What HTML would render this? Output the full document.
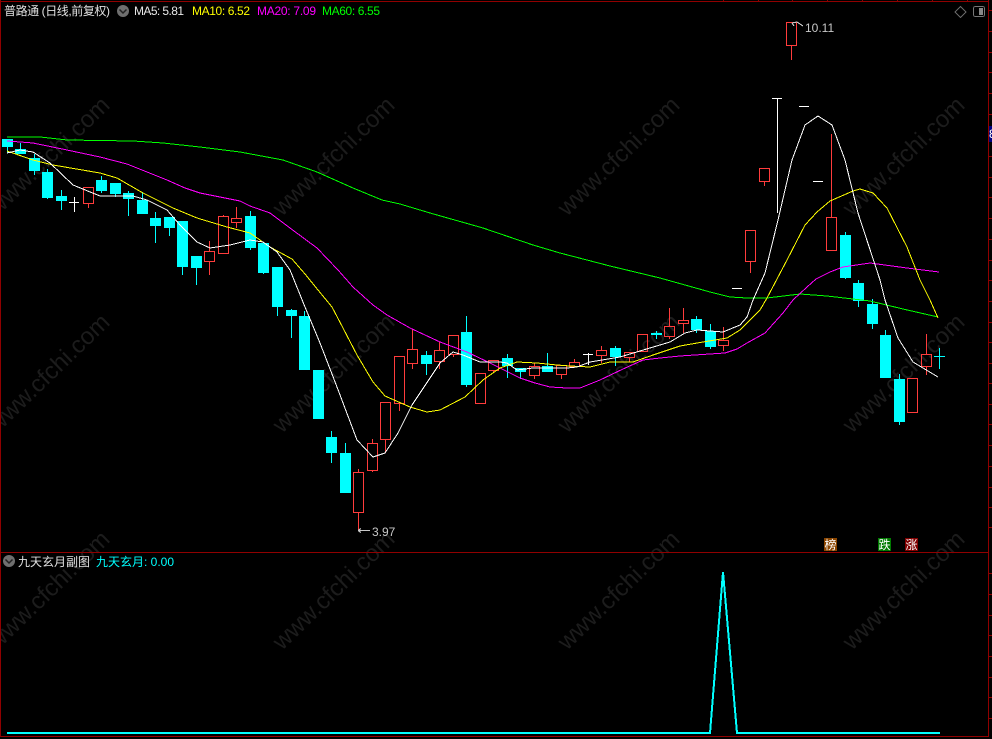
<!DOCTYPE html>
<html><head><meta charset="utf-8"><style>
html,body{margin:0;padding:0;background:#000;width:992px;height:739px;overflow:hidden}
svg{display:block}
text{font-family:"Liberation Sans","WenQuanYi Zen Hei","Noto Sans CJK SC",sans-serif;font-size:12px}
.wm text{font-size:24px;fill:#1c1c1c}
.c rect{fill:#0ff}
.c path{stroke:#0ff;fill:none}
.r rect{fill:none;stroke:#ff3c3c}
.r path{stroke:#ff3c3c;fill:none}
.w{stroke:#fff;fill:none}
.ma{fill:none;shape-rendering:crispEdges}
</style></head><body>
<svg width="992" height="739" viewBox="0 0 992 739" xmlns="http://www.w3.org/2000/svg">
<rect width="992" height="739" fill="#000"/>
<g class="wm">
<text transform="translate(-3,217) rotate(-44)">www.cfchi.com</text>
<text transform="translate(282,217) rotate(-44)">www.cfchi.com</text>
<text transform="translate(567,217) rotate(-44)">www.cfchi.com</text>
<text transform="translate(852,217) rotate(-44)">www.cfchi.com</text>
<text transform="translate(-3,434) rotate(-44)">www.cfchi.com</text>
<text transform="translate(282,434) rotate(-44)">www.cfchi.com</text>
<text transform="translate(567,434) rotate(-44)">www.cfchi.com</text>
<text transform="translate(852,434) rotate(-44)">www.cfchi.com</text>
<text transform="translate(-3,651) rotate(-44)">www.cfchi.com</text>
<text transform="translate(282,651) rotate(-44)">www.cfchi.com</text>
<text transform="translate(567,651) rotate(-44)">www.cfchi.com</text>
<text transform="translate(852,651) rotate(-44)">www.cfchi.com</text>
</g>
<g shape-rendering="crispEdges">
<path d="M.5 0V737M0 1.5H989M988.5 0V737M0 552.5H989M0 736.5H989" stroke="#900000" fill="none"/>
<path d="M723.5 0v2M758.5 0v2M792.5 0v2M827.5 0v2M862.5 0v2M897.5 0v2M932.5 0v2M967.5 0v2M989 10.5h3M989 31.5h3M989 52.5h3M989 72.5h3M989 93.5h3M989 114.5h3M989 156.5h3M989 177.5h3M989 197.5h3M989 218.5h3M989 239.5h3M989 260.5h3M989 280.5h3M989 301.5h3M989 322.5h3M989 342.5h3M989 363.5h3M989 383.5h3M989 404.5h3M989 424.5h3M989 445.5h3M989 466.5h3M989 487.5h3M989 507.5h3M989 527.5h3M989 573.5h3M989 594.5h3M989 615.5h3M989 635.5h3M989 656.5h3M989 677.5h3M989 697.5h3M989 718.5h3" stroke="#900000" fill="none"/>
<rect x="989" y="126" width="3" height="16" fill="#000080"/>
<g class="c">
<rect x="2" y="139" width="11" height="8"/><path d="M7.5 147V153"/>
<rect x="15" y="149" width="11" height="5"/><path d="M20.5 143V149"/>
<rect x="29" y="158" width="11" height="13"/><path d="M34.5 154V175"/>
<rect x="42" y="172" width="11" height="26"/><path d="M47.5 169V199"/>
<rect x="56" y="196" width="11" height="5"/><path d="M61.5 190V210"/>
<rect x="96" y="180" width="11" height="11"/><path d="M101.5 176V193"/>
<rect x="110" y="183" width="11" height="11"/><path d="M115.5 183V197"/>
<rect x="123" y="193" width="11" height="6"/><path d="M128.5 191V216"/>
<rect x="137" y="200" width="11" height="14"/><path d="M142.5 192V214"/>
<rect x="150" y="218" width="11" height="8"/><path d="M155.5 212V243"/>
<rect x="164" y="217" width="11" height="11"/><path d="M169.5 217V236"/>
<rect x="177" y="221" width="11" height="46"/><path d="M182.5 221V275"/>
<rect x="191" y="256" width="11" height="12"/><path d="M196.5 256V285"/>
<rect x="245" y="216" width="11" height="32"/><path d="M250.5 211V250"/>
<rect x="258" y="243" width="11" height="30"/><path d="M263.5 243V274"/>
<rect x="272" y="267" width="11" height="40"/><path d="M277.5 267V316"/>
<rect x="286" y="310" width="11" height="6"/><path d="M291.5 309V338"/>
<rect x="299" y="316" width="11" height="54"/><path d="M304.5 311V370"/>
<rect x="313" y="370" width="11" height="49"/>
<rect x="326" y="437" width="11" height="16"/><path d="M331.5 431V463"/>
<rect x="340" y="453" width="11" height="40"/><path d="M345.5 443V493"/>
<rect x="421" y="355" width="11" height="9"/><path d="M426.5 351V375"/>
<rect x="461" y="332" width="11" height="53"/><path d="M466.5 316V387"/>
<rect x="502" y="358" width="11" height="8"/><path d="M507.5 354V378"/>
<rect x="515" y="368" width="11" height="4"/><path d="M520.5 368V379"/>
<rect x="542" y="366" width="11" height="6"/><path d="M547.5 353V372"/>
<rect x="610" y="348" width="11" height="9"/><path d="M615.5 346V366"/>
<rect x="651" y="333" width="11" height="2"/><path d="M656.5 331V339"/>
<rect x="691" y="319" width="11" height="11"/><path d="M696.5 316V333"/>
<rect x="705" y="331" width="11" height="16"/><path d="M710.5 324V349"/>
<rect x="840" y="235" width="11" height="43"/><path d="M845.5 232V279"/>
<rect x="853" y="283" width="11" height="18"/><path d="M858.5 280V307"/>
<rect x="867" y="304" width="11" height="20"/><path d="M872.5 299V329"/>
<rect x="880" y="335" width="11" height="43"/><path d="M885.5 330V378"/>
<rect x="894" y="379" width="11" height="43"/><path d="M899.5 374V425"/>
<path d="M934 356.5H945M939.5 348V369"/>
</g>
<g class="r">
<rect x="83.5" y="187.5" width="10" height="16"/><path d="M88.5 203V208"/>
<rect x="204.5" y="251.5" width="10" height="10"/><path d="M209.5 241V251M209.5 261V275"/>
<rect x="218.5" y="216.5" width="10" height="37"/><path d="M223.5 215V216"/>
<rect x="231.5" y="218.5" width="10" height="4"/><path d="M236.5 207V218M236.5 222V228"/>
<rect x="353.5" y="472.5" width="10" height="40"/><path d="M358.5 469V472M358.5 512V530"/>
<rect x="367.5" y="443.5" width="10" height="27"/><path d="M372.5 439V443M372.5 470V472"/>
<rect x="380.5" y="402.5" width="10" height="37"/><path d="M385.5 439V453"/>
<rect x="394.5" y="356.5" width="10" height="47"/><path d="M399.5 403V411"/>
<rect x="407.5" y="349.5" width="10" height="14"/><path d="M412.5 329V349M412.5 363V369"/>
<rect x="434.5" y="350.5" width="10" height="11"/><path d="M439.5 342V350M439.5 361V369"/>
<rect x="448.5" y="335.5" width="10" height="19"/><path d="M453.5 354V357"/>
<rect x="475.5" y="373.5" width="10" height="30"/>
<rect x="488.5" y="360.5" width="10" height="10"/><path d="M493.5 370V373"/>
<rect x="529.5" y="366.5" width="10" height="9"/><path d="M534.5 363V366M534.5 375V379"/>
<rect x="556.5" y="365.5" width="10" height="9"/><path d="M561.5 374V379"/>
<rect x="569.5" y="362.5" width="10" height="4"/><path d="M574.5 359V362"/>
<rect x="596.5" y="350.5" width="10" height="5"/><path d="M601.5 346V350M601.5 355V363"/>
<rect x="624.5" y="352.5" width="10" height="5"/><path d="M629.5 357V362"/>
<rect x="637.5" y="334.5" width="10" height="17"/>
<rect x="664.5" y="326.5" width="10" height="10"/><path d="M669.5 308V326M669.5 336V339"/>
<rect x="678.5" y="320.5" width="10" height="3"/><path d="M683.5 308V320M683.5 323V333"/>
<rect x="718.5" y="340.5" width="10" height="5"/><path d="M723.5 327V340M723.5 345V351"/>
<rect x="745.5" y="230.5" width="10" height="31"/><path d="M750.5 261V273"/>
<rect x="759.5" y="168.5" width="10" height="13"/><path d="M764.5 181V186"/>
<rect x="786.5" y="22.5" width="10" height="23"/><path d="M791.5 45V60"/>
<rect x="826.5" y="217.5" width="10" height="33"/><path d="M831.5 134V217"/>
<rect x="907.5" y="378.5" width="10" height="34"/>
<rect x="921.5" y="354.5" width="10" height="12"/><path d="M926.5 334V354M926.5 366V375"/>
</g>
<path class="w" d="M69 202.5H79M74.5 197V212M583 354.5H593M588.5 353V365M772 98.5H782M777.5 98V213M732 288.5H742M799 106.5H809M813 181.5H823"/>
<polyline class="ma" stroke="#00ff00" points="7,137 40,137 67,140 133,141 163,143 200,147 240,152 283,160 317,172 353,188 382,200 400,204 430,213 483,228 533,245 560,253 610,266 660,278 710,292 730,297 747,298 767,298 800,294 827,296 853,299 870,301 903,309 938,317"/>
<polyline class="ma" stroke="#ff00ff" points="7,141 33,143 67,150 100,157 127,164 147,172 167,180 185,188 200,193 220,197 240,201 250,206 270,213 290,228 317,248 338,270 353,287 373,305 387,315 410,328 440,342 467,352 490,363 520,378 535,383 550,387 567,388 580,388 600,380 623,369 643,360 660,358 680,356 725,353 737,349 747,343 765,333 783,313 793,300 807,287 816,279 830,272 843,267 870,263 907,268 939,272"/>
<polyline class="ma" stroke="#ffff00" points="7,151 33,160 53,165 100,173 117,178 143,193 173,208 197,218 227,227 250,233 270,247 292,259 305,274 318,290 332,307 343,328 357,355 373,382 385,396 410,407 427,412 440,410 465,397 483,380 500,368 517,362 537,363 557,365 570,366 590,367 610,362 633,362 653,355 680,346 703,342 727,338 740,330 760,310 767,298 787,260 805,225 817,212 830,201 853,191 860,189 873,193 887,208 907,247 920,280 930,300 938,318"/>
<polyline class="ma" stroke="#ffffff" points="7,153 20,150 33,152 50,163 73,185 100,196 133,196 147,200 167,210 180,225 197,242 210,248 230,245 250,240 263,242 277,252 290,270 305,307 320,343 337,387 357,440 373,457 385,453 398,433 412,405 440,363 453,352 463,355 480,362 500,362 507,363 517,370 533,368 567,368 577,367 590,362 620,357 650,348 670,342 685,333 697,330 723,332 740,325 747,317 753,300 765,273 778,220 792,160 805,125 818,116 832,125 845,160 858,213 880,280 885,300 898,338 913,362 938,377"/>
<polyline fill="none" stroke="#0ff" stroke-width="2" points="7,733 710,733 723,572 737,733 940,733"/>
<rect x="824" y="538" width="13" height="13" fill="#8a4500"/>
<rect x="878" y="538" width="13" height="13" fill="#007a00"/>
<rect x="905" y="538" width="13" height="13" fill="#800000"/>
<path d="M358 530.5H370M358 530.5l3-2M358 530.5l3 2" stroke="#c8c8c8" fill="none"/>
<path d="M792 23l5-1 6 4M792 23l2 3" stroke="#c8c8c8" fill="none"/>
<path d="M960.5 6.5l5.5 5.5-5.5 5.5-5.5-5.5z" stroke="#666" fill="none"/>
<rect x="973.5" y="6.5" width="11" height="10" rx="2" stroke="#777" fill="none"/>
<rect x="979" y="8" width="4" height="7" fill="#888"/>
</g>
<circle cx="123" cy="11" r="6" fill="#6f6f6f"/>
<path d="M119.5 9.5l3.5 3.5 3.5-3.5" stroke="#222" stroke-width="1.5" fill="none"/>
<circle cx="9" cy="561" r="6" fill="#6f6f6f"/>
<path d="M5.5 559.5l3.5 3.5 3.5-3.5" stroke="#222" stroke-width="1.5" fill="none"/>
<text x="4" y="15" fill="#e0e0e0" textLength="106">普路通 (日线,前复权)</text>
<text x="134" y="15" fill="#e8e8e8" textLength="50">MA5: 5.81</text>
<text x="192" y="15" fill="#ffff00" textLength="58">MA10: 6.52</text>
<text x="257" y="15" fill="#ff00ff" textLength="59">MA20: 7.09</text>
<text x="322" y="15" fill="#00ff00" textLength="58">MA60: 6.55</text>
<text x="18" y="566" fill="#e0e0e0">九天玄月副图</text>
<text x="96" y="566" fill="#00ffff" textLength="78">九天玄月: 0.00</text>
<text x="372" y="536" fill="#c8c8c8">3.97</text>
<text x="805" y="32" fill="#c8c8c8">10.11</text>
<text x="824.5" y="549" fill="#fff">榜</text>
<text x="878.5" y="549" fill="#fff">跌</text>
<text x="905.5" y="549" fill="#fff">涨</text>
<text x="989" y="138" fill="#fff">8</text>
</svg>
</body></html>
